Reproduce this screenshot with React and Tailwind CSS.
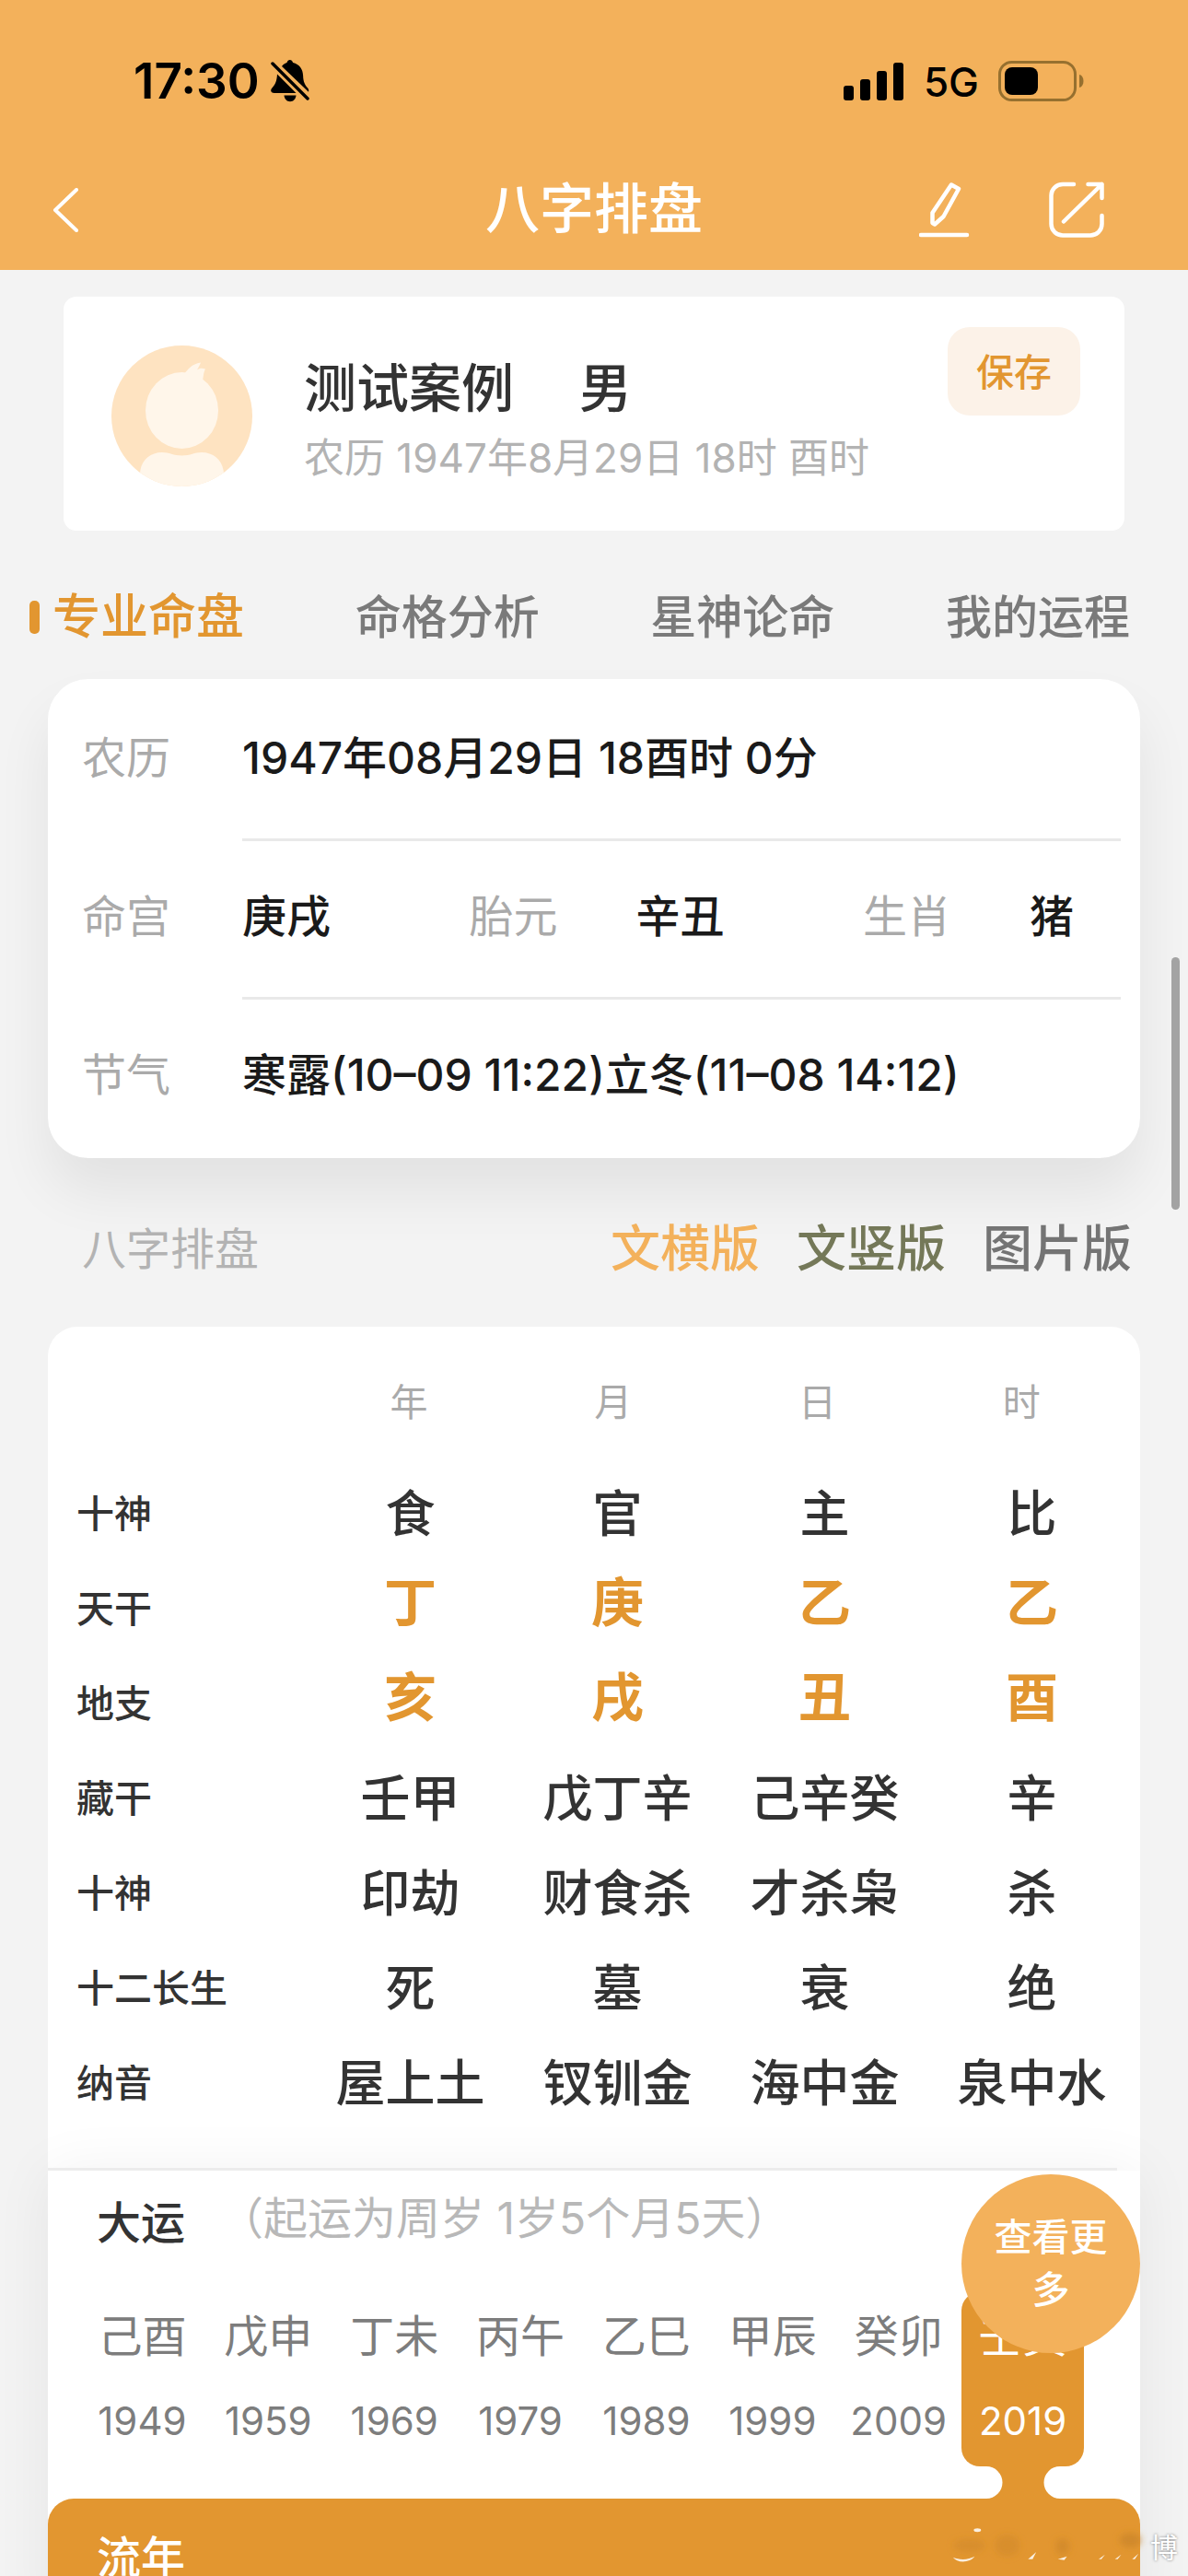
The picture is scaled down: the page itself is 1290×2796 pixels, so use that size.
import { useState } from "react";

const TABS = ["专业命盘", "命格分析", "星神论命", "我的运程"];

const MODES = [
  { name: "文横版", color: "text-[#f3b15b]" },
  { name: "文竖版", color: "text-[#747858]" },
  { name: "图片版", color: "text-[#747474]" },
];

const PILLARS = ["年", "月", "日", "时"];

const ROWS = [
  { label: "十神", cells: ["食", "官", "主", "比"] },
  { label: "天干", cells: ["丁", "庚", "乙", "乙"], accent: true },
  { label: "地支", cells: ["亥", "戌", "丑", "酉"], accent: true },
  { label: "藏干", cells: ["壬甲", "戊丁辛", "己辛癸", "辛"] },
  { label: "十神", cells: ["印劫", "财食杀", "才杀枭", "杀"] },
  { label: "十二长生", cells: ["死", "墓", "衰", "绝"] },
  { label: "纳音", cells: ["屋上土", "钗钏金", "海中金", "泉中水"] },
];

const DECADES = [
  { name: "己酉", year: 1949 },
  { name: "戊申", year: 1959 },
  { name: "丁未", year: 1969 },
  { name: "丙午", year: 1979 },
  { name: "乙巳", year: 1989 },
  { name: "甲辰", year: 1999 },
  { name: "癸卯", year: 2009 },
  { name: "壬寅", year: 2019 },
];

function StatusBar() {
  return (
    <div className="flex h-[176px] items-center justify-between pl-[145px] pr-[112px] text-black">
      <div className="flex items-center gap-[12px]">
        <span className="text-[53px] font-semibold leading-none">17:30</span>
        <svg width="42" height="46" viewBox="0 0 42 46" fill="currentColor">
          <path d="M12 7C14 4.500 16 3.300 17.500 3c.6-2 1.800-3 3.300-3s2.700 1 3.300 3c7 1.600 10.800 7 11 14 .2 7 2 10 5 13.500 1.200 1.500 1.400 3 .9 4.200z" />
          <path d="M7 15.500 27.500 36H4c-3.600 0-5-2.600-2.800-5.200C4.800 27 6.600 23 7 15.500z" />
          <path d="M14.500 38.500h13c-.4 4-3 6.700-6.500 6.700s-6.100-2.700-6.500-6.700z" />
          <path d="M2 4 40 42" stroke="currentColor" strokeWidth="3.500" strokeLinecap="round" />
        </svg>
      </div>
      <div className="flex items-center">
        <svg width="65" height="42" viewBox="0 0 65 42" fill="currentColor">
          <rect x="0" y="26" width="11" height="16" rx="3" />
          <rect x="18" y="19" width="11" height="23" rx="3" />
          <rect x="36" y="10" width="11" height="32" rx="3" />
          <rect x="54" y="1" width="11" height="41" rx="3" />
        </svg>
        <span className="ml-[22px] pt-[2px] text-[44px] font-medium leading-none">5G</span>
        <svg className="ml-[21px]" width="94" height="44" viewBox="0 0 94 44">
          <rect x="1.500" y="1.500" width="82" height="41" rx="13" fill="none" stroke="#96702f" strokeWidth="3" />
          <rect x="7" y="7" width="36" height="30" rx="8" fill="#000" />
          <path d="M88 15c6 1 6 13 0 14z" fill="#96702f" />
        </svg>
      </div>
    </div>
  );
}

function NavBar() {
  return (
    <nav className="grid h-[98px] grid-cols-[1fr_auto_1fr] items-center pl-[56px] pr-[90px] pt-[2px] text-white">
      <button aria-label="返回" className="justify-self-start pt-[4px]">
        <svg width="30" height="48" viewBox="0 0 30 48" fill="none" stroke="currentColor" strokeWidth="4" strokeLinecap="round" strokeLinejoin="round">
          <path d="M27 2 4 24l23 22" />
        </svg>
      </button>
      <h1 className="pl-[34px] text-[59px] font-medium leading-none">八字排盘</h1>
      <div className="flex items-center gap-[85px] justify-self-end pt-[4px]">
        <button aria-label="编辑">
          <svg width="56" height="62" viewBox="0 0 56 62" fill="none" stroke="currentColor" strokeWidth="4.500" strokeLinecap="round" strokeLinejoin="round">
            <path d="M2 58h50M35 3.500 43 8 26.500 38 17 46.500 14.500 45V34z" />
          </svg>
        </button>
        <button aria-label="分享">
          <svg width="61" height="62" viewBox="0 0 61 62" fill="none" stroke="currentColor" strokeWidth="4.500" strokeLinecap="round" strokeLinejoin="round">
            <path d="M27 3H15C8 3 2.500 8.500 2.500 15v31c0 7 5.500 12.500 12.500 12.500h30C52 58.500 57.500 53 57.500 46V37" />
            <path d="M42.500 3h15v15M57.500 3 16 43.500" />
          </svg>
        </button>
      </div>
    </nav>
  );
}

function Avatar() {
  return (
    <svg width="153" height="153" viewBox="0 0 153 153" className="mt-[53px] shrink-0">
      <defs>
        <clipPath id="avatar">
          <circle cx="76.500" cy="76.500" r="76.500" />
        </clipPath>
      </defs>
      <g clipPath="url(#avatar)">
        <rect width="153" height="153" fill="#fee3c1" />
        <g fill="#fff6ea">
          <ellipse cx="76.500" cy="70.500" rx="39.500" ry="41.500" />
          <path d="M79 31c4-5 8-11 18-12.500-1 3-2.500 5-4 8 3-2 5-2 9-1-2.500 5-2 9-3.500 15z" />
          <path d="M31 140c0-14 10-24 24-24 8 0 12 3.500 21.500 3.500S90 116 98 116c14 0 24 10 24 24v20H31z" />
        </g>
      </g>
    </svg>
  );
}

function ProfileCard() {
  return (
    <section className="mx-[69px] mt-[29px] flex h-[254px] items-start rounded-[14px] bg-white pl-[52px]">
      <Avatar />
      <div className="ml-[56px] pt-[68px]">
        <h2 className="flex gap-[71px] text-[57px] font-medium leading-[64px] text-[#333]">
          <span>测试案例</span>
          <span>男</span>
        </h2>
        <p className="mt-[21px] text-[44px] leading-[44px] text-[#b3b3b3]">
          农历 1947年8月29日 18时 酉时
        </p>
      </div>
      <button className="ml-auto mr-[48px] mt-[33px] h-[96px] w-[144px] rounded-[24px] bg-[#fcf2e8] pt-[3px] text-[41px] font-medium text-[#e29630]">
        保存
      </button>
    </section>
  );
}

function Tabs() {
  const [active, setActive] = useState(TABS[0]);

  return (
    <div className="flex h-[161px] items-center justify-between pl-[32px] pr-[63px] pt-[27px]">
      {TABS.map((tab) =>
        tab === active ? (
          <button key={tab} className="flex items-center gap-[14px] text-[52px] font-medium leading-none text-[#e29630]">
            <span className="h-[36px] w-[11px] rounded-[5px] bg-[#e29630]" />
            {tab}
          </button>
        ) : (
          <button key={tab} onClick={() => setActive(tab)} className="text-[50px] font-medium leading-none text-[#7a7a7a]">
            {tab}
          </button>
        )
      )}
    </div>
  );
}

function InfoRow({ label, last, children }) {
  return (
    <div className="flex h-[172px] pl-[37px] text-[48px] leading-[52px]">
      <dt className="w-[174px] pt-[56px] text-[#aaa]">{label}</dt>
      <dd
        className={
          last
            ? "mr-[21px] flex-1 pt-[56px] font-medium text-[#1a1a1a]"
            : "mr-[21px] flex-1 border-b-3 border-[#e9e9e9] pt-[56px] font-medium text-[#1a1a1a]"
        }
      >
        {children}
      </dd>
    </div>
  );
}

function InfoCard() {
  return (
    <dl className="mx-[52px] rounded-[44px] bg-white pt-[4px] shadow-[0_36px_60px_rgba(0,0,0,0.07)]">
      <InfoRow label="农历">1947年08月29日 18酉时 0分</InfoRow>
      <InfoRow label="命宫">
        <div className="flex justify-between pr-[51px]">
          <span>庚戌</span>
          <span className="flex gap-[85px]">
            <span className="font-normal text-[#aaa]">胎元</span>辛丑
          </span>
          <span className="flex gap-[85px]">
            <span className="font-normal text-[#aaa]">生肖</span>猪
          </span>
        </div>
      </InfoRow>
      <InfoRow label="节气" last>
        寒露(10–09 11:22)立冬(11–08 14:12)
      </InfoRow>
    </dl>
  );
}

function ChartHeading() {
  return (
    <div className="flex h-[183px] items-center justify-between pl-[89px] pr-[61px] pt-[15px]">
      <h3 className="text-[48px] leading-none text-[#b3b3b3]">八字排盘</h3>
      <div className="flex gap-[40px]">
        {MODES.map((m) => (
          <button key={m.name} className={`text-[54px] font-medium leading-none ${m.color}`}>
            {m.name}
          </button>
        ))}
      </div>
    </div>
  );
}

function ChartTable() {
  return (
    <div className="mx-[52px] rounded-t-[32px] bg-white pb-[43px]">
      <table className="block">
        <thead className="block">
          <tr className="grid h-[152px] grid-cols-[281px_repeat(4,1fr)] items-center pr-[18px] pt-[12px] text-[41px] leading-none text-[#aaa]">
            <td />
            {PILLARS.map((p) => (
              <th key={p} scope="col" className="font-normal">
                {p}
              </th>
            ))}
          </tr>
        </thead>
        <tbody className="block">
          {ROWS.map((row, i) => (
            <tr key={i} className="grid h-[103px] grid-cols-[281px_repeat(4,1fr)] items-center pr-[5px] text-[#333]">
              <th scope="row" className="pl-[31px] text-left text-[41px] font-medium leading-none">
                {row.label}
              </th>
              {row.cells.map((cell, j) => (
                <td
                  key={j}
                  className={
                    row.accent
                      ? "pb-[14px] text-center text-[57px] font-bold leading-none text-[#e29630]"
                      : "text-center text-[54px] font-medium leading-none"
                  }
                >
                  {cell}
                </td>
              ))}
            </tr>
          ))}
        </tbody>
      </table>
    </div>
  );
}

function Decade({ name, year, active }) {
  if (!active) {
    return (
      <button className="flex flex-col items-center gap-[36px] pb-[21px] pt-[20px] leading-[56px] text-[#7d7d7d]">
        <span className="text-[48px]">{name}</span>
        <span className="text-[42px]">{year}</span>
      </button>
    );
  }
  return (
    <button className="relative mr-[4px] flex flex-col items-center gap-[36px] rounded-[20px] bg-[#e29630] pb-[21px] pt-[20px] leading-[56px] text-white">
      <span className="text-[48px]">{name}</span>
      <span className="text-[42px]">{year}</span>
      {/* neck joining the selected decade to the year panel */}
      <svg className="absolute inset-x-0 top-full mx-auto" width="80" height="36" viewBox="0 0 80 36" fill="#e29630">
        <path d="M0 0H80A17.500 17.500 0 0 0 80 35V36H0V35A17.500 17.500 0 0 0 0 0z" />
      </svg>
    </button>
  );
}

function LuckSection() {
  return (
    <section className="relative mx-[52px] bg-white pt-[24px] shadow-[0_0_60px_rgba(0,0,0,0.06)]">
      <div className="absolute left-0 right-[25px] top-[-3px] h-[3px] bg-[#ececec]" />
      <div className="flex items-start gap-[37px] pl-[53px] text-[48px]">
        <h3 className="font-medium leading-[66px] text-[#333]">大运</h3>
        <p className="leading-[56px] text-[#b8b8b8]">（起运为周岁 1岁5个月5天）</p>
      </div>
      <div className="mt-[42px] grid grid-cols-8 pl-[34px] pr-[57px]">
        {DECADES.map((d) => (
          <Decade key={d.year} {...d} active={d.year === 2019} />
        ))}
      </div>
      <div className="mt-[35px] h-[140px] rounded-t-[28px] bg-[#e29630] pl-[53px] pt-[36px] text-[48px] font-medium leading-[56px] text-white">
        流年
      </div>
      <button className="absolute right-0 top-[4px] h-[194px] w-[194px] rounded-full bg-[#f3b15b] px-[30px] text-[41px] font-medium leading-[57px] text-white">
        查看更多
      </button>
    </section>
  );
}

function Watermark() {
  return (
    <div className="absolute bottom-[11px] right-[11px] flex items-end">
      <svg width="226" height="44" viewBox="0 0 230 44">
        <defs>
          <filter id="smudge" x="-20%" y="-50%" width="140%" height="200%">
            <feGaussianBlur stdDeviation="4" />
          </filter>
        </defs>
        <g filter="url(#smudge)" fill="#c98328">
          <ellipse cx="30" cy="22" rx="18" ry="8" opacity=".4" />
          <ellipse cx="72" cy="22" rx="14" ry="12" opacity=".4" />
          <ellipse cx="133" cy="23" rx="8" ry="9" opacity=".6" />
          <ellipse cx="208" cy="16" rx="12" ry="8" opacity=".7" />
        </g>
        <g fill="#fff" opacity=".85">
          <path d="M12 35c7 3 17 3 24-1-5 7-19 8-24 1z" />
          <ellipse cx="39" cy="5" rx="4" ry="2" />
          <path d="M95 37l9-8-4 8zM128 37l10-3-3 4zM173 37l7-5-4 5zM191 37l7-5-4 5zM210 37l7-6-4 6z" />
        </g>
      </svg>
      <span className="text-[30px] leading-[40px] text-white [text-shadow:0_0_3px_#777]">
        博
      </span>
    </div>
  );
}

export default function App() {
  return (
    <div className="relative flex h-screen flex-col overflow-hidden bg-[#f3f3f3] font-['Inter','Noto_Sans_CJK_SC',sans-serif]">
      <header className="shrink-0 bg-[#f3b15b] pb-[19px]">
        <StatusBar />
        <NavBar />
      </header>
      <main className="min-h-0 flex-1 overflow-hidden">
        <ProfileCard />
        <Tabs />
        <InfoCard />
        <ChartHeading />
        <ChartTable />
        <LuckSection />
      </main>
      <div className="absolute right-[9px] top-[1039px] h-[274px] w-[9px] rounded-full bg-[#a3a3a3]" />
      <Watermark />
    </div>
  );
}
